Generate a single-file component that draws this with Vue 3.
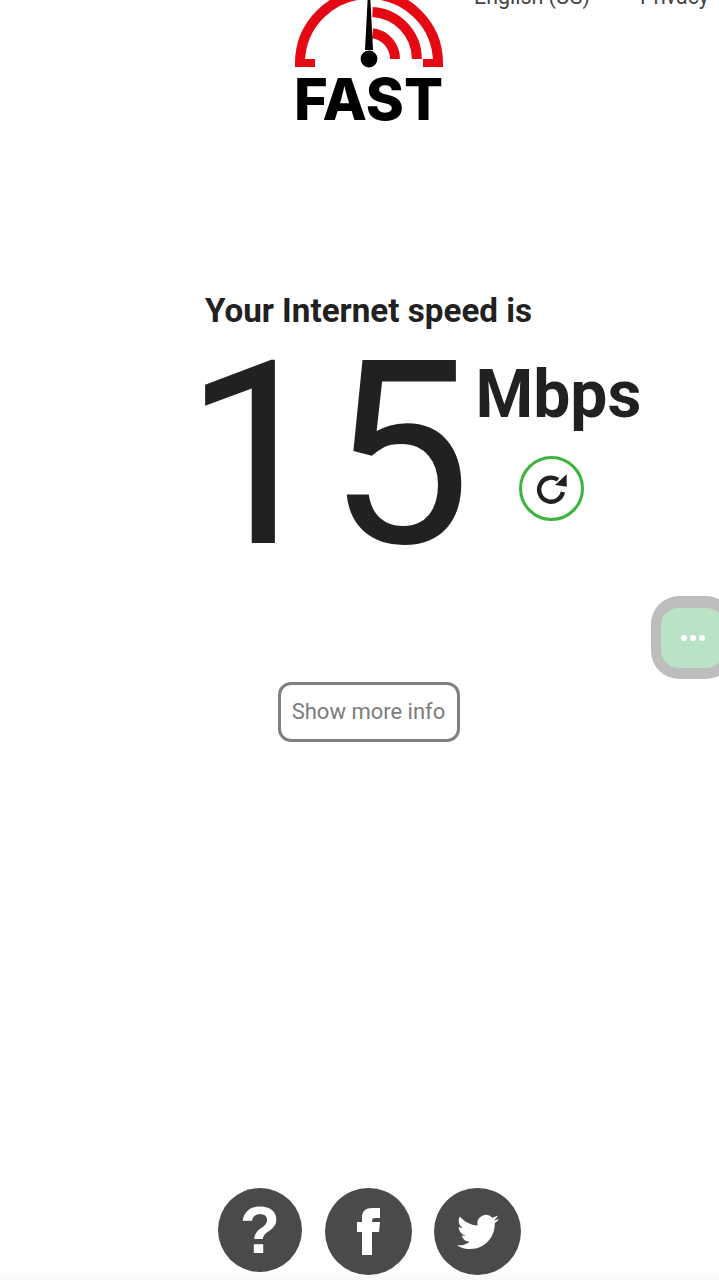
<template>
  <div class="page">
    <nav class="top-links">
      <span>English (US)</span>
      <span>Privacy</span>
    </nav>

    <main class="main">
      <svg class="logo" viewBox="294 0 150 122" aria-label="FAST">
        <path class="arc" d="M300 67V63A69 69 0 0 1 438 63V67" />
        <path class="foot" d="M300 59H315V67H300ZM423 59H438V67H423Z" />
        <path class="arc" d="M372.5 12A47 47 0 0 1 416.8 59" />
        <path class="arc" d="M372.5 33.2A26 26 0 0 1 395 59" />
        <path class="needle" d="M367.6 0H370.4L373 50H365Z" />
        <circle class="needle" cx="369" cy="59" r="8.4" />
        <text class="fast" x="294" y="119.5" textLength="149" lengthAdjust="spacingAndGlyphs">FAST</text>
      </svg>

      <p class="label">Your Internet speed is</p>

      <div class="speed">
        <span class="value">15</span>
        <div class="units">
          <span class="mbps">Mbps</span>
          <button type="button" class="reload" aria-label="Run again">
            <svg viewBox="0 0 59 59">
              <path class="reload-arc" d="M40.9 33A12 12 0 1 1 36 20.8" />
              <path class="reload-head" d="M44.7 15.3L33 26L44.7 27.7Z" />
            </svg>
          </button>
        </div>
      </div>

      <button type="button" class="more">Show more info</button>

      <footer class="social">
        <a class="round small"><span class="question">?</span></a>
        <a class="round">
          <svg viewBox="0 0 87 87">
            <path d="M37 67V44H32V34H37V29C37 23 41 20 47 20H55V30H50C48 30 47 31 47 33V34H55L54 44H47V67Z" />
          </svg>
        </a>
        <a class="round">
          <svg class="bird" viewBox="0 0 24 24">
            <path d="M23.953 4.57a10 10 0 01-2.825.775 4.958 4.958 0 002.163-2.723c-.951.555-2.005.959-3.127 1.184a4.92 4.92 0 00-8.384 4.482C7.69 8.095 4.067 6.13 1.64 3.162a4.822 4.822 0 00-.666 2.475c0 1.71.87 3.213 2.188 4.096a4.904 4.904 0 01-2.228-.616v.06a4.923 4.923 0 003.946 4.827 4.996 4.996 0 01-2.212.085 4.936 4.936 0 004.604 3.417 9.867 9.867 0 01-6.102 2.105c-.39 0-.779-.023-1.17-.067a13.995 13.995 0 007.557 2.209c9.053 0 13.998-7.496 13.998-13.985 0-.21 0-.42-.015-.63A9.935 9.935 0 0024 4.59z" />
          </svg>
        </a>
      </footer>
    </main>

    <div class="home-strip"></div>

    <div class="chat-tab">
      <i></i><i></i><i></i>
    </div>
  </div>
</template>

<script setup>
</script>

<style>
html,
body {
  margin: 0;
  background: #fff;
}
</style>

<style scoped>
.page {
  position: relative;
  width: 719px;
  height: 1280px;
  overflow: hidden;
  background: #fff;
  font-family: Roboto, "Liberation Sans", sans-serif;
  color: #212121;
}

.top-links {
  display: flex;
  justify-content: flex-end;
  gap: 50px;
  height: 20px;
  margin-top: -13px;
  padding-right: 10px;
  font-size: 21.4px;
  line-height: 20px;
  color: #444;
}

.main {
  display: flex;
  flex-direction: column;
  align-items: center;
  height: 1275px;
  margin-top: -7px;
  padding-left: 18px;
}

.logo {
  display: block;
  width: 150px;
  height: 122px;
  flex: none;
  overflow: hidden;
}

.arc {
  fill: none;
  stroke: #e50914;
  stroke-width: 10;
}

.foot {
  fill: #e50914;
}

.needle {
  fill: #000;
}

.fast {
  font-family: Inter, sans-serif;
  font-size: 58px;
  font-weight: 800;
  fill: #000;
}

.label {
  margin: 169px 0 0;
  font-size: 33.2px;
  line-height: 40px;
  font-weight: 700;
}

.speed {
  display: flex;
  margin-top: 11px;
  margin-left: 88px;
  height: 210px;
}

.value {
  margin-top: 9px;
  font-size: 256px;
  line-height: 210px;
  font-weight: 400;
  color: #212121;
}

.units {
  display: flex;
  flex-direction: column;
  margin-left: 4px;
}

.mbps {
  margin-top: 18px;
  font-size: 66px;
  line-height: 70px;
  font-weight: 700;
}

.reload {
  align-self: flex-start;
  width: 65px;
  height: 65px;
  margin: 26px 0 0 44px;
  padding: 0;
  box-sizing: border-box;
  border: 3px solid #3cb43c;
  border-radius: 50%;
  background: #fff;
}

.reload svg {
  display: block;
  width: 100%;
  height: 100%;
}

.reload-arc {
  fill: none;
  stroke: #212121;
  stroke-width: 4.4;
}

.reload-head {
  fill: #212121;
}

.more {
  margin-top: 130px;
  width: 182px;
  height: 60px;
  padding: 0 0 2px;
  box-sizing: border-box;
  border: 3px solid #808080;
  border-radius: 13px;
  background: #fff;
  font-family: inherit;
  font-size: 22px;
  color: #7c7c7c;
}

.social {
  display: flex;
  align-items: flex-start;
  gap: 22px;
  margin-top: auto;
  padding-left: 2px;
}

.round {
  display: flex;
  align-items: center;
  justify-content: center;
  width: 87px;
  height: 87px;
  border-radius: 50%;
  background: #4a4a4a;
}

.round.small {
  width: 84px;
  height: 84px;
  margin-right: 1px;
}

.round svg {
  display: block;
  width: 100%;
  height: 100%;
  fill: #fff;
}

.round svg.bird {
  width: 42px;
  height: 42px;
}

.question {
  font-family: "Liberation Sans", sans-serif;
  font-size: 66px;
  font-weight: 700;
  line-height: 66px;
  color: #fff;
}

.home-strip {
  height: 5px;
  background: #fafafa;
}

.chat-tab {
  position: absolute;
  top: 596px;
  left: 651px;
  display: flex;
  align-items: center;
  justify-content: center;
  gap: 3px;
  width: 83px;
  height: 83px;
  box-sizing: border-box;
  border: solid #bdbdbd;
  border-width: 12px 10px 11px;
  border-radius: 28px;
  background: #b9e2c6;
}

.chat-tab i {
  width: 6px;
  height: 6px;
  border-radius: 50%;
  background: #fff;
}
</style>
